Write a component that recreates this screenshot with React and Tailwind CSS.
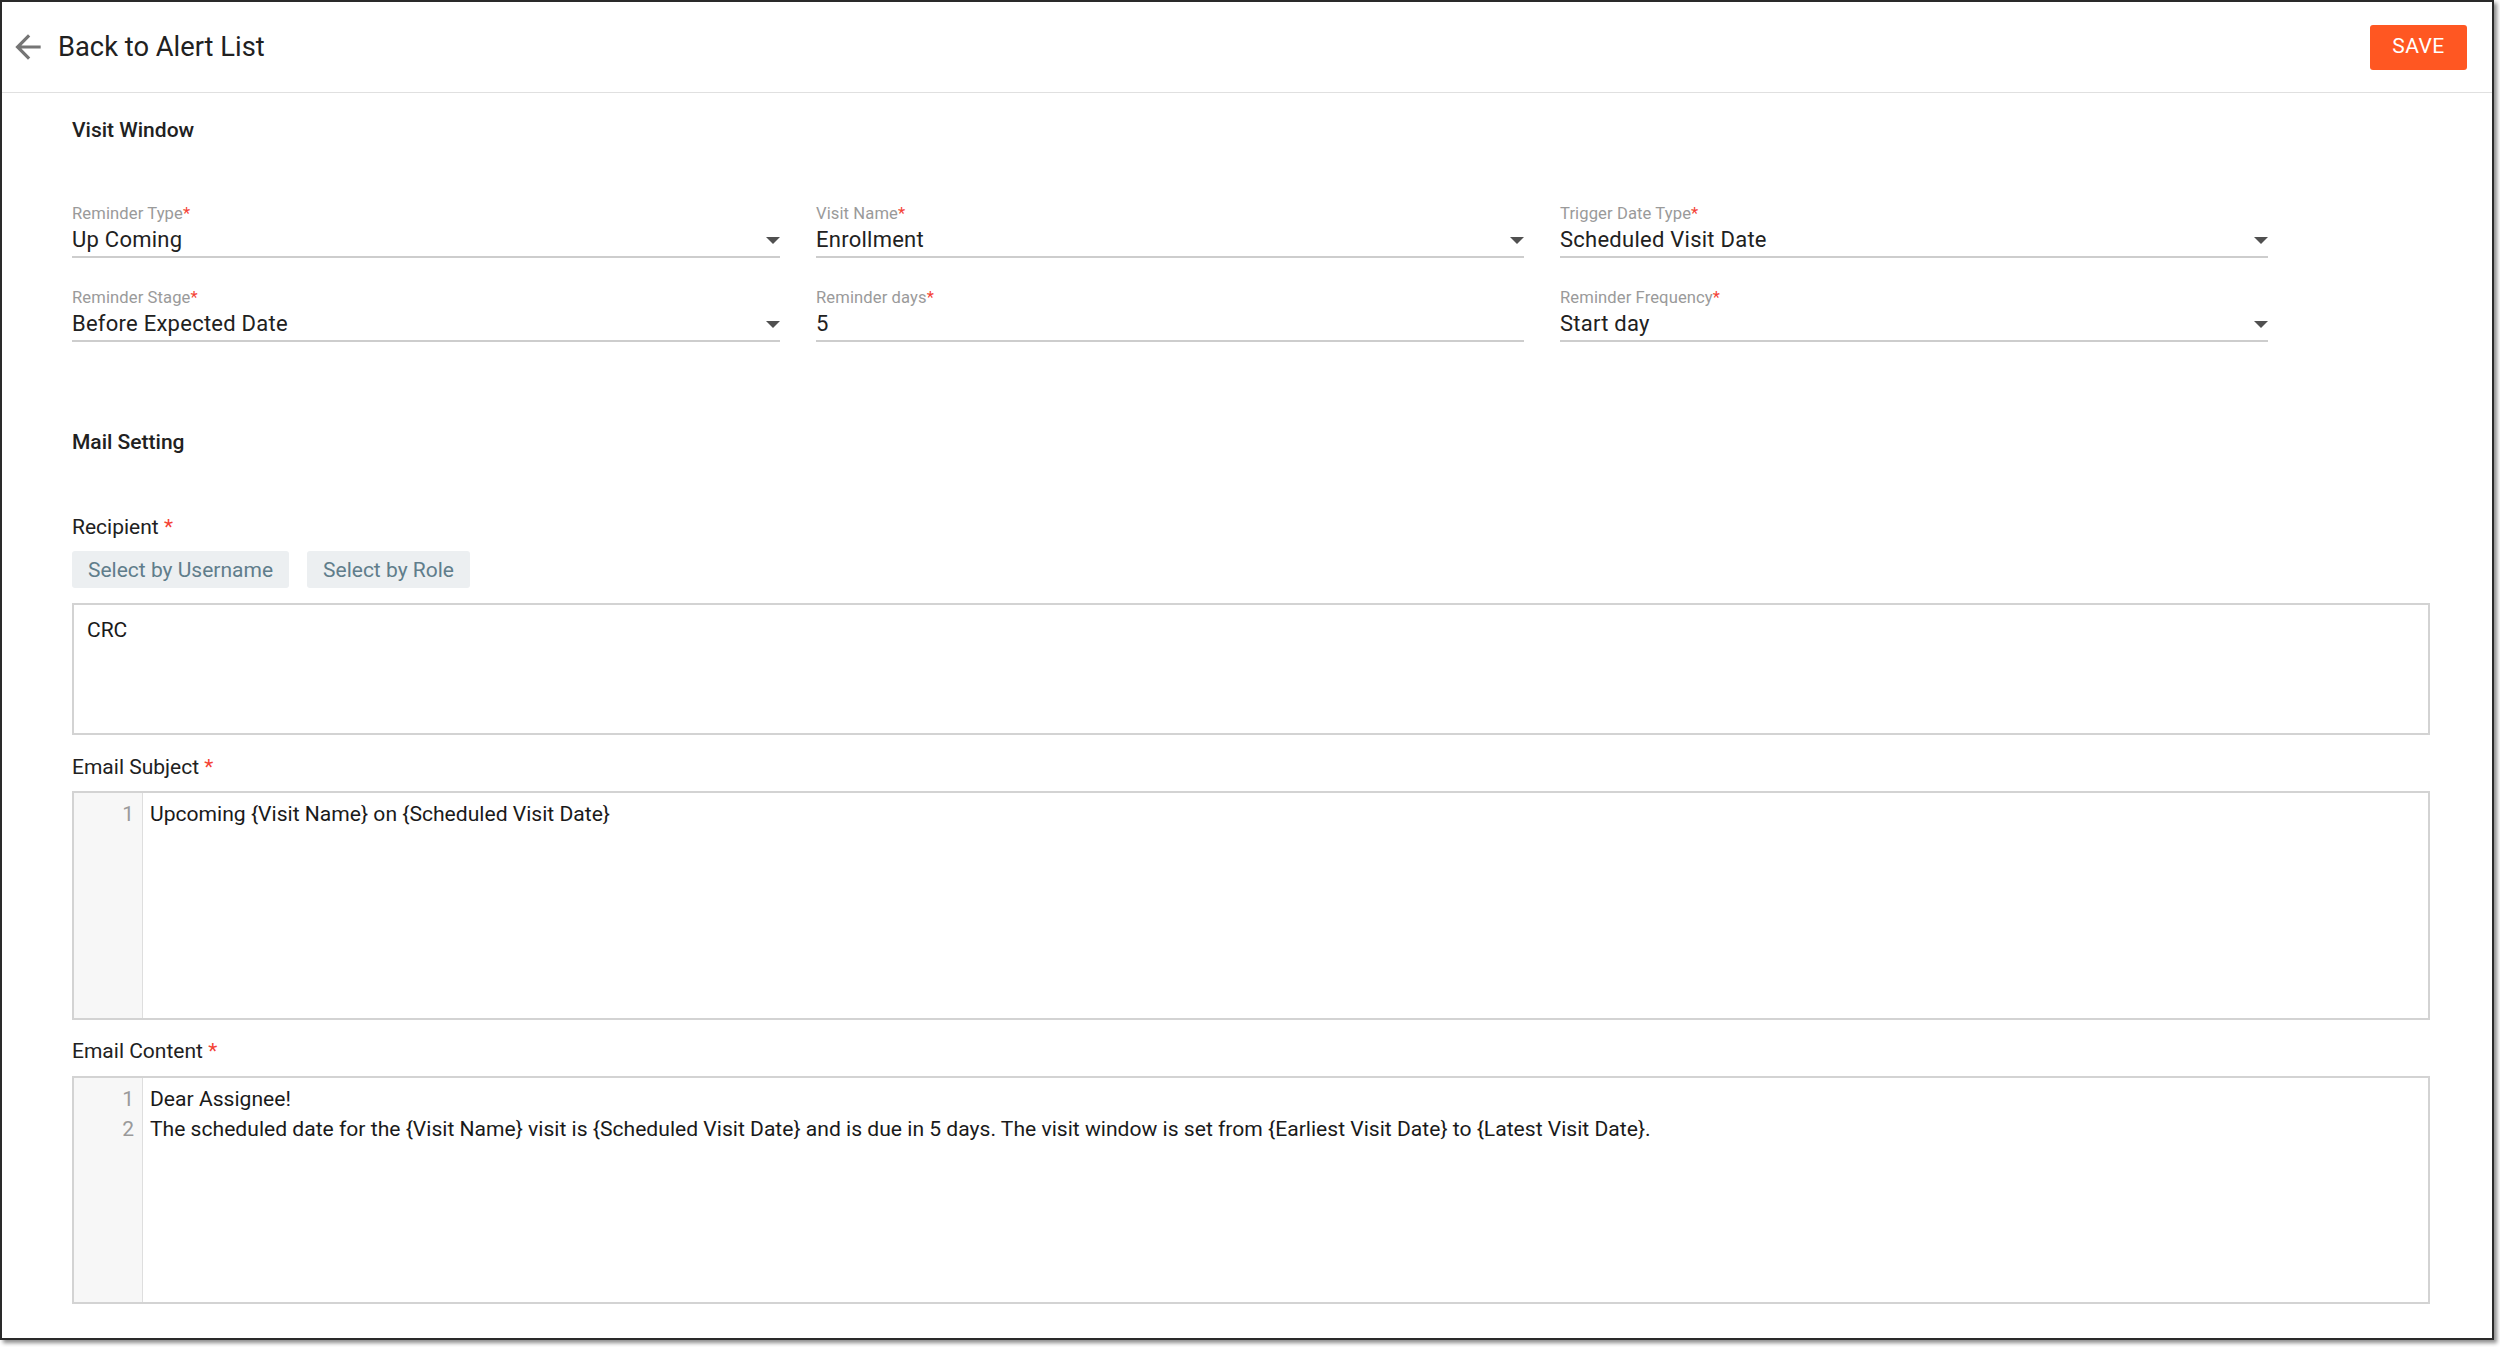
import React from "react";

function Caret() {
  return (
    <svg width="14" height="7" viewBox="0 0 14 7" className="shrink-0">
      <polygon points="0,0 14,0 7,7" fill="#505050" />
    </svg>
  );
}

function Field({ label, value, select = true }) {
  return (
    <div className="w-[708px] flex flex-col">
      <div className="h-[18px] leading-[18px] text-[16.6px] text-[#9a9a9a] tracking-[0.1px]">
        {label}
        <span className="text-[#f44336]">*</span>
      </div>
      <div className="mt-[3px] h-[28px] flex items-center justify-between">
        <span className="text-[22px] leading-[28px] text-[#212121] tracking-[0.25px]">{value}</span>
        {select && <Caret />}
      </div>
      <div className="mt-[2px] h-[2px] bg-[#cdcdcd]" />
    </div>
  );
}

function Label({ children, className = "" }) {
  return (
    <div className={"text-[21px] leading-[24px] text-[#212121] " + className}>
      {children} <span className="text-[#f44336]">*</span>
    </div>
  );
}

function Editor({ lines, className = "" }) {
  return (
    <div className={"flex border-2 border-[#d3d3d3] " + className}>
      <div className="w-[69px] bg-[#f7f7f7] border-r border-[#dedede] pt-[6px] pr-[8px] flex flex-col items-end">
        {lines.map((_, i) => (
          <div key={i} className="text-[21px] leading-[30px] text-[#9a9a9a]">
            {i + 1}
          </div>
        ))}
      </div>
      <div className="flex-1 pt-[6px] pl-[7px]">
        {lines.map((l, i) => (
          <div key={i} className="text-[21.1px] leading-[30px] text-[#1a1a1a] whitespace-pre">
            {l}
          </div>
        ))}
      </div>
    </div>
  );
}

export default function App() {
  return (
    <div className="w-[2500px] h-[1347px] bg-white font-['Roboto','Liberation_Sans',sans-serif]">
      <div className="w-[2494px] h-[1340px] border-2 border-[#2a2a2a] bg-white shadow-[3px_3px_4px_rgba(0,0,0,0.45)] flex flex-col">
        {/* Header */}
        <div className="h-[91px] shrink-0 border-b border-[#e0e0e0] flex items-center justify-between pl-[7px] pr-[25px]">
          <div className="flex items-center">
            <svg width="38" height="38" viewBox="0 0 24 24">
              <path d="M20 11H7.83l5.59-5.59L12 4l-8 8 8 8 1.41-1.41L7.83 13H20v-2z" fill="#757575" />
            </svg>
            <span className="ml-[11px] text-[27.3px] leading-[32px] text-[#212121]">Back to Alert List</span>
          </div>
          <button className="w-[97px] h-[45px] rounded-[3px] bg-[#ff5722] text-white text-[21px] tracking-[0.5px] flex items-center justify-center">
            SAVE
          </button>
        </div>

        {/* Main */}
        <div className="pl-[70px] pr-[62px] flex flex-col">
          <div className="mt-[25px] text-[21px] leading-[24px] font-medium text-[#212121]">Visit Window</div>

          <div className="mt-[63px] flex flex-col gap-[31px]">
            <div className="flex gap-[36px]">
              <Field label="Reminder Type" value="Up Coming" />
              <Field label="Visit Name" value="Enrollment" />
              <Field label="Trigger Date Type" value="Scheduled Visit Date" />
            </div>
            <div className="flex gap-[36px]">
              <Field label="Reminder Stage" value="Before Expected Date" />
              <Field label="Reminder days" value="5" select={false} />
              <Field label="Reminder Frequency" value="Start day" />
            </div>
          </div>

          <div className="mt-[88px] text-[21px] leading-[24px] font-medium text-[#212121]">Mail Setting</div>

          <Label className="mt-[61px]">Recipient</Label>
          <div className="mt-[12px] flex gap-[18px]">
            <button className="h-[37px] px-[16px] rounded-[3px] bg-[#eceff1] text-[#607d8b] text-[21px] leading-[24px]">
              Select by Username
            </button>
            <button className="h-[37px] px-[16px] rounded-[3px] bg-[#eceff1] text-[#607d8b] text-[21px] leading-[24px]">
              Select by Role
            </button>
          </div>
          <div className="mt-[15px] h-[132px] border-2 border-[#d3d3d3] pt-[13px] pl-[13px]">
            <div className="text-[21px] leading-[24px] text-[#1a1a1a]">CRC</div>
          </div>

          <Label className="mt-[20px]">Email Subject</Label>
          <Editor className="mt-[12px] h-[229px]" lines={["Upcoming {Visit Name} on {Scheduled Visit Date}"]} />

          <Label className="mt-[19px]">Email Content</Label>
          <Editor
            className="mt-[13px] h-[228px]"
            lines={[
              "Dear Assignee!",
              "The scheduled date for the {Visit Name} visit is {Scheduled Visit Date} and is due in 5 days. The visit window is set from {Earliest Visit Date} to {Latest Visit Date}.",
            ]}
          />
        </div>
      </div>
    </div>
  );
}
